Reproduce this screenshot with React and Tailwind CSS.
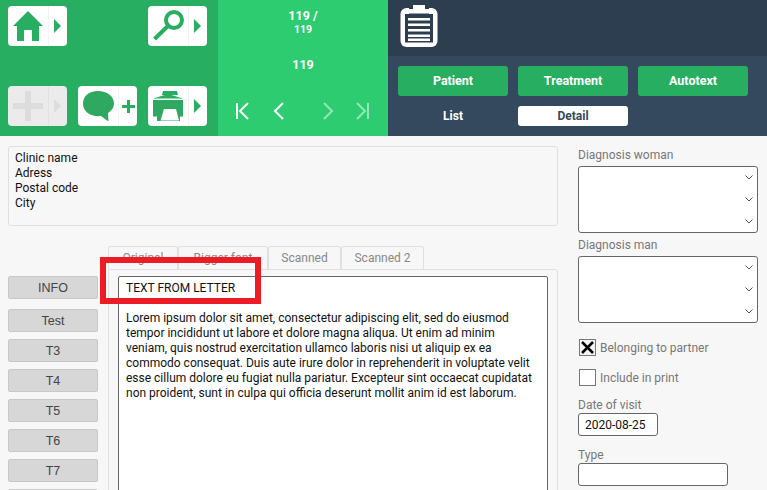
import React from 'react'

const G = '#27ae60'

function Arrow({ color = G }) {
    return <svg width="8" height="14" viewBox="0 0 8 14"><path d="M0 0L7 7L0 14Z" fill={color} /></svg>
}

function IconButton({ icon, side, disabled }) {
    return (
        <div className={`flex h-10 w-[59px] rounded-[4px] ${disabled ? 'bg-[#ebebeb]' : 'bg-white'}`}>
            <div className="flex w-[40px] items-center justify-center">{icon}</div>
            <div className={`flex flex-1 items-center justify-center border-l ${disabled ? 'border-[#e2e2e2]' : 'border-[#f3f3f3]'}`}>
                {side}
            </div>
        </div>
    )
}

const HomeIcon = (
    <svg width="30" height="30" viewBox="0 0 30 30">
        <path d="M15 0L30 15H26V30H19V19H11V30H4V15H0Z" fill={G} />
    </svg>
)
const SearchIcon = (
    <svg width="32" height="32" viewBox="0 0 32 32" fill="none" stroke={G}>
        <circle cx="22" cy="10" r="8" strokeWidth="4" />
        <path d="M16 16L2.500 29" strokeWidth="4" />
    </svg>
)
const PlusIcon = (
    <svg width="30" height="30" viewBox="0 0 30 30"><path d="M12 0H18V12H30V18H18V30H12V18H0V12H12Z" fill="#dcdcdc" /></svg>
)
const ChatIcon = (
    <svg width="31" height="31" viewBox="0 0 31 31">
        <path d="M15 0C24 0 31 5 31 12.500C31 17 28 20 25 22L25.500 30.500L18 25C8 26 0 21 0 12.500C0 5 6 0 15 0Z" fill="#2fa862" />
    </svg>
)
const PrintIcon = (
    <svg width="30" height="31" viewBox="0 0 30 31">
        <path d="M10 0H24L25 4H9Z M0 7.500L15 3L30 7.500Z" fill={G} />
        <path d="M0 9H30V25.500H27V30H4V25.500H0Z" fill="#2fa862" />
        <path d="M11 18H23L26 29.500H7.500Z" fill="white" />
    </svg>
)

function NavIcon({ d, dim }) {
    return (
        <svg width="16" height="18" viewBox="0 0 16 18" fill="none" stroke="white" strokeWidth="2" className={dim ? 'opacity-50' : ''}>
            <path d={d} />
        </svg>
    )
}

function Clipboard() {
    return (
        <svg width="38" height="42" viewBox="0 0 38 42">
            <rect x="0.5" y="3" width="37" height="39" rx="6" fill="white" />
            <rect x="5" y="9" width="28" height="28.5" fill="#2c3e50" />
            <rect x="9" y="0" width="20" height="9" fill="#2c3e50" />
            <path d="M13 0H25V4H30V8.5H8V4H13Z" fill="white" />
            <path d="M8 13H30V15.5H8Z M8 18.5H30V21H8Z M8 24H30V26.5H8Z M8 29.500H30V32H8Z M8 33.500H30V36H8Z" fill="white" />
        </svg>
    )
}

function Chevrons() {
    return (
        <div className="flex h-full w-[16px] flex-col items-center gap-[17px] pt-[8px]">
            {[0, 1, 2].map(i => (
                <svg key={i} width="8" height="5" viewBox="0 0 8 5" fill="none" stroke="#555" strokeWidth="1"><path d="M0.5 0.500L4 4L7.500 0.500" /></svg>
            ))}
        </div>
    )
}

function Label({ children, className = '' }) {
    return <div className={`text-[12px] leading-[16px] text-[#777] ${className}`}>{children}</div>
}

export default function App() {
    const sideButtons = ['INFO', 'Test', 'T3', 'T4', 'T5', 'T6', 'T7', '']
    const tabs = [['Original', 'w-[70px]'], ['Bigger font', 'w-[90px]'], ['Scanned', 'w-[73px]'], ['Scanned 2', 'w-[83px]']]

    return (
        <div className="h-[490px] w-[767px] overflow-hidden bg-[#f7f7f7] font-['Roboto',sans-serif] text-[12px]">
            {/* header */}
            <div className="flex h-[136px]">
                <div className="grid w-[218px] grid-cols-[59px_59px_59px] content-start gap-x-[11px] gap-y-[40px] bg-[#27ae60] pl-[8px] pt-[6px]">
                    <IconButton icon={HomeIcon} side={<Arrow />} />
                    <div />
                    <IconButton icon={SearchIcon} side={<Arrow />} />
                    <IconButton icon={PlusIcon} side={<Arrow color="#dcdcdc" />} disabled />
                    <IconButton icon={ChatIcon} side={<svg width="13" height="13" viewBox="0 0 13 13"><path d="M5 0H8V5H13V8H8V13H5V8H0V5H5Z" fill={G} /></svg>} />
                    <IconButton icon={PrintIcon} side={<Arrow />} />
                </div>
                <div className="flex w-[170px] flex-col items-center bg-[#2ecc71] font-bold text-white">
                    <div className="mt-[8px] text-[12.5px] leading-[16px]">119 /</div>
                    <div className="text-[10.5px] leading-[12px]">119</div>
                    <div className="mt-[21px] text-[12.5px] leading-[16px]">119</div>
                    <div className="mt-[29px] flex w-full items-center pl-[17px]">
                        <NavIcon d="M2 1V17M13 1L5 9L13 17" />
                        <div className="ml-[20px]"><NavIcon d="M12 1L4 9L12 17" /></div>
                        <div className="ml-[33px]"><NavIcon d="M4 1L12 9L4 17" dim /></div>
                        <div className="ml-[18px]"><NavIcon d="M3 1L11 9L3 17M14 1V17" dim /></div>
                    </div>
                </div>
                <div className="flex flex-1 flex-col bg-[#34495e]">
                    <div className="h-[56px] bg-[#2c3e50] pl-[12px] pt-[5px]"><Clipboard /></div>
                    <div className="mt-[10px] flex gap-[10px] pl-[10px]">
                        {['Patient', 'Treatment', 'Autotext'].map(t => (
                            <div key={t} className="flex h-[30px] w-[110px] items-center justify-center rounded-[3px] bg-[#27ae60] text-[12.5px] font-bold text-white">{t}</div>
                        ))}
                    </div>
                    <div className="mt-[10px] flex gap-[10px] pl-[10px]">
                        <div className="flex h-[20px] w-[110px] items-center justify-center font-bold text-white">List</div>
                        <div className="flex h-[20px] w-[110px] items-center justify-center rounded-[3px] bg-white font-bold text-[#34495e]">Detail</div>
                    </div>
                </div>
            </div>

            {/* body */}
            <div className="flex">
                <div className="w-[578px] pl-[8px]">
                    <div className="mt-[10px] h-[80px] w-[550px] rounded-[3px] border border-[#e0e0e0] px-[6px] py-[4px] leading-[15px] text-[#111]">
                        <div>Clinic name</div>
                        <div>Adress</div>
                        <div>Postal code</div>
                        <div>City</div>
                    </div>
                    <div className="flex">
                        <div className="flex w-[90px] flex-col gap-[7px] pt-[50px]">
                            {sideButtons.map((b, i) => (
                                <div key={i} className={`flex h-[23px] shrink-0 items-center justify-center rounded-[2px] border border-[#c8c8c8] bg-[#d7d7d7] pt-[1px] font-['Liberation_Sans',sans-serif] text-[12.5px] text-[#444] ${i === 0 ? 'mb-[3px]' : ''}`}>{b}</div>
                            ))}
                        </div>
                        <div className="relative ml-[10px] w-[450px] pt-[20px]">
                            <div className="flex">
                                {tabs.map(([t, w]) => (
                                    <div key={t} className={`flex h-[23px] items-center justify-center rounded-t-[3px] border border-b-0 border-[#e0e0e0] text-[#888] ${w}`}>{t}</div>
                                ))}
                            </div>
                            <div className="h-[300px] rounded-tr-[3px] border border-[#e0e0e0] px-[9px] pt-[6px]">
                                <div className="h-[300px] rounded-[2px] border border-[#666] bg-white px-[7px] pt-[4px] leading-[15px] text-[#111]">
                                    <div>TEXT FROM LETTER</div>
                                    <div className="mt-[15px]">
                                        <div>Lorem ipsum dolor sit amet, consectetur adipiscing elit, sed do eiusmod</div>
                                        <div>tempor incididunt ut labore et dolore magna aliqua. Ut enim ad minim</div>
                                        <div>veniam, quis nostrud exercitation ullamco laboris nisi ut aliquip ex ea</div>
                                        <div>commodo consequat. Duis aute irure dolor in reprehenderit in voluptate velit</div>
                                        <div>esse cillum dolore eu fugiat nulla pariatur. Excepteur sint occaecat cupidatat</div>
                                        <div>non proident, sunt in culpa qui officia deserunt mollit anim id est laborum.</div>
                                    </div>
                                </div>
                            </div>
                            {/* annotation drawn over the letter */}
                            <div className="absolute left-[-8px] top-[31px] h-[47px] w-[161px] border-[6px] border-[#ed1c24]" />
                        </div>
                    </div>
                </div>

                <div className="w-[180px] pt-[11px]">
                    <Label>Diagnosis woman</Label>
                    <div className="mt-[3px] flex h-[67px] justify-end rounded-[3px] border border-[#666] bg-white"><Chevrons /></div>
                    <Label className="mt-[4px]">Diagnosis man</Label>
                    <div className="mt-[3px] flex h-[67px] justify-end rounded-[3px] border border-[#666] bg-white"><Chevrons /></div>
                    <div className="mt-[16px] flex h-[17px] items-center pl-[1px] leading-[17px]">
                        <div className="flex h-[17px] w-[17px] items-center justify-center border border-[#777] bg-[#f3f3f3]">
                            <svg width="13" height="13" viewBox="0 0 13 13" stroke="black" strokeWidth="2.500"><path d="M1 1L12 12M12 1L1 12" /></svg>
                        </div>
                        <span className="ml-[4px] pt-[2px] text-[#777]">Belonging to partner</span>
                    </div>
                    <div className="mt-[13px] flex h-[17px] items-center pl-[1px] leading-[17px]">
                        <div className="h-[17px] w-[17px] border border-[#777] bg-white" />
                        <span className="ml-[4px] pt-[2px] text-[#777]">Include in print</span>
                    </div>
                    <Label className="mt-[11px]">Date of visit</Label>
                    <div className="flex h-[23px] w-[80px] items-center rounded-[3px] border border-[#666] bg-white pl-[6px] text-[#111]">2020-08-25</div>
                    <Label className="mt-[11px]">Type</Label>
                    <div className="h-[23px] w-[150px] rounded-[3px] border border-[#666] bg-white" />
                </div>
            </div>
        </div>
    )
}
